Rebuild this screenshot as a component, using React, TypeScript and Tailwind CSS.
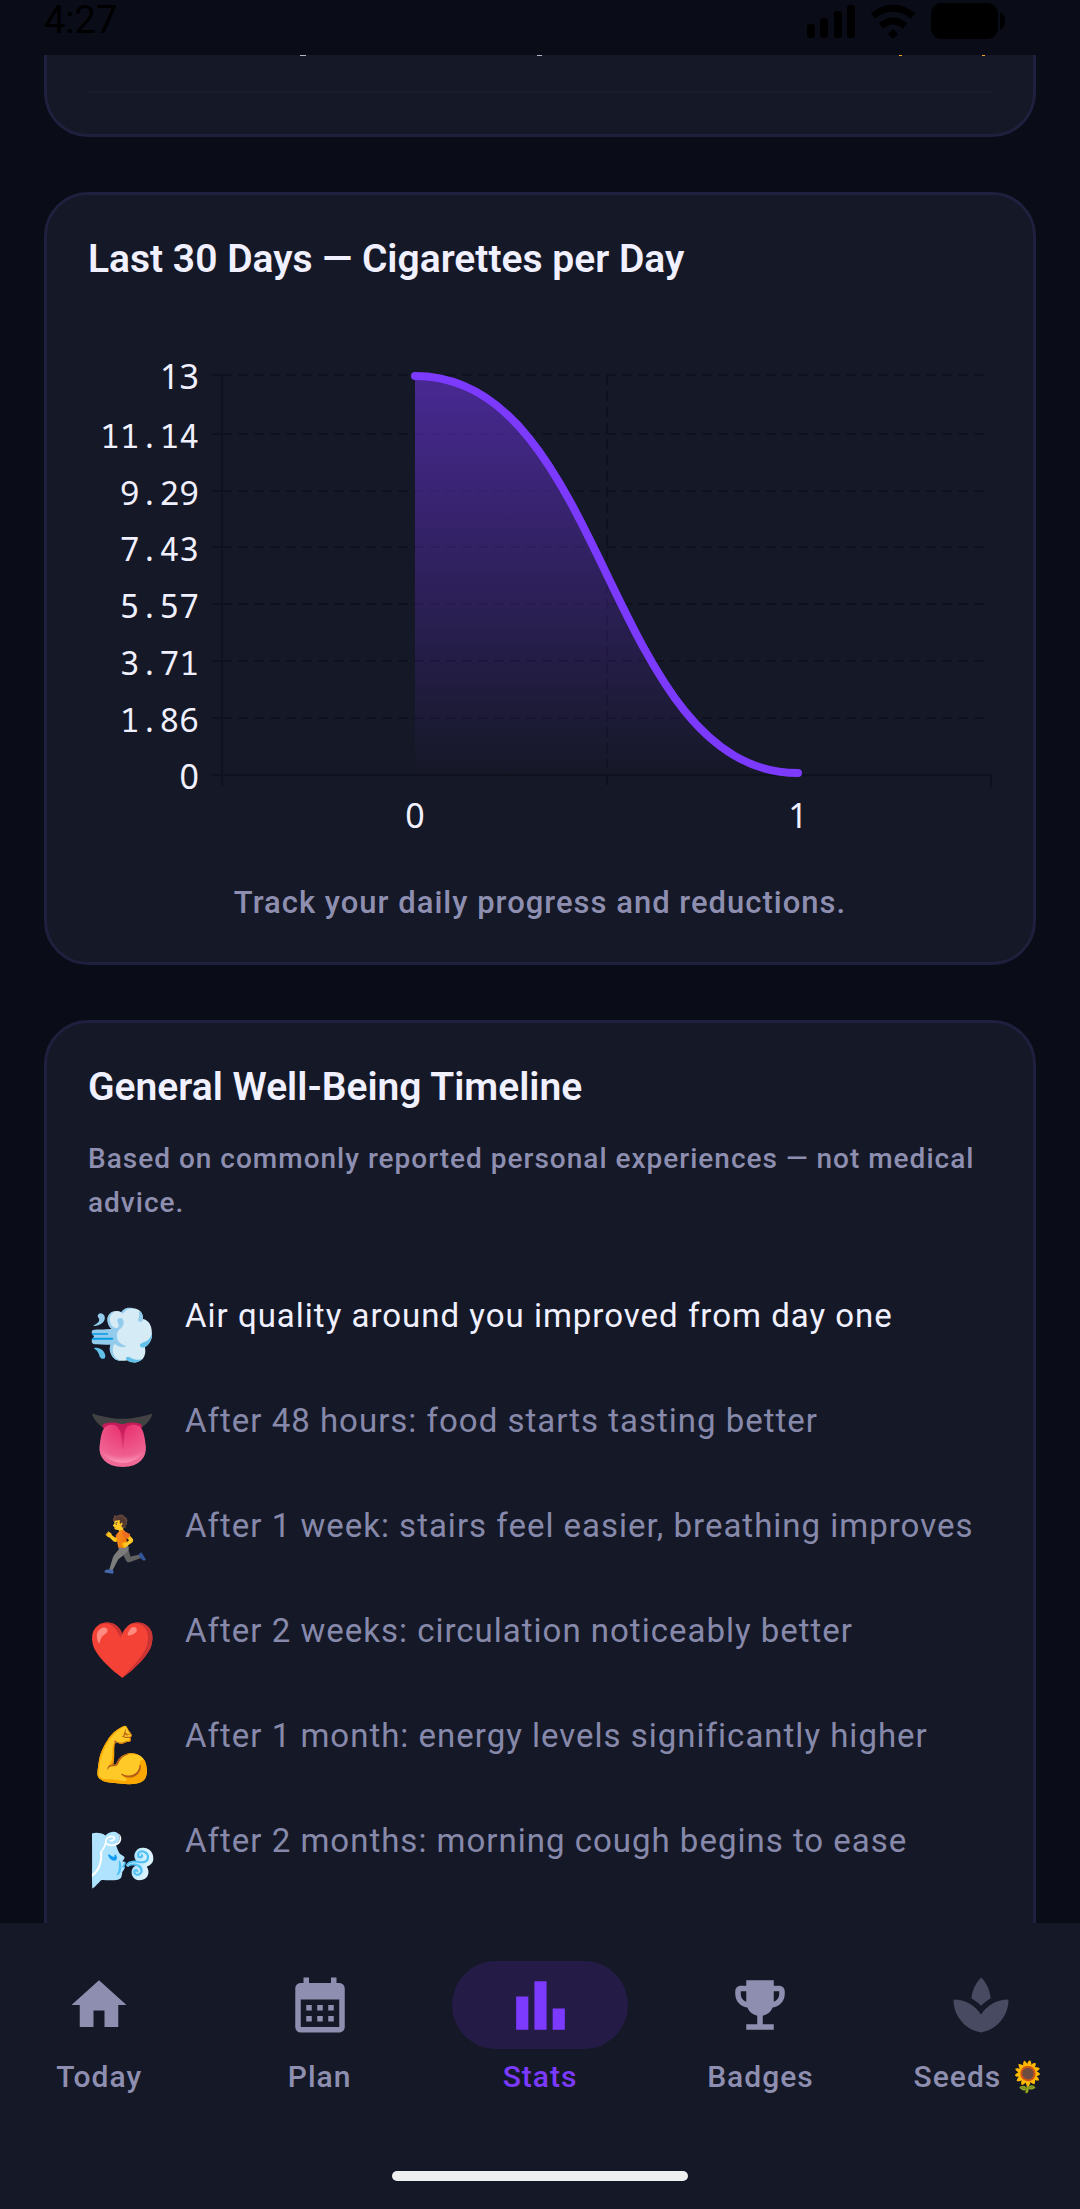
import type { ReactNode } from 'react';
import type { IconType } from 'react-icons';
import { MdBarChart, MdCalendarMonth, MdEmojiEvents, MdHome, MdSpa } from 'react-icons/md';
import { clsx } from 'clsx';

const milestones = [
  { emoji: '💨', text: 'Air quality around you improved from day one', reached: true },
  { emoji: '👅', text: 'After 48 hours: food starts tasting better', reached: false },
  { emoji: '🏃', text: 'After 1 week: stairs feel easier, breathing improves', reached: false },
  { emoji: '❤️', text: 'After 2 weeks: circulation noticeably better', reached: false },
  { emoji: '💪', text: 'After 1 month: energy levels significantly higher', reached: false },
  { emoji: '🌬️', text: 'After 2 months: morning cough begins to ease', reached: false },
];

const ticks = [
  { label: '13', y: 93 },
  { label: '11.14', y: 152 },
  { label: '9.29', y: 209 },
  { label: '7.43', y: 265 },
  { label: '5.57', y: 322 },
  { label: '3.71', y: 379 },
  { label: '1.86', y: 436 },
  { label: '0', y: 493 },
];

const tabs: { label: string; icon: IconType; active?: boolean; locked?: boolean }[] = [
  { label: 'Today', icon: MdHome },
  { label: 'Plan', icon: MdCalendarMonth },
  { label: 'Stats', icon: MdBarChart, active: true },
  { label: 'Badges', icon: MdEmojiEvents },
  { label: 'Seeds 🌻', icon: MdSpa, locked: true },
];

function StatusBar() {
  return (
    <header className="flex h-[55px] shrink-0 items-start justify-between pr-[75px] pl-11 text-black">
      <span className="text-[38px] leading-[41px]">4:27</span>
      <div className="flex items-center gap-4 pt-[3px]">
        <svg className="h-9 w-12" viewBox="0 0 48 36" fill="currentColor" aria-label="Signal">
          <rect x="0" y="21" width="8" height="14" rx="3" />
          <rect x="13" y="15" width="8" height="20" rx="3" />
          <rect x="27" y="8" width="8" height="27" rx="3" />
          <rect x="40" y="2" width="8" height="33" rx="3" />
        </svg>
        <svg className="h-9 w-11" viewBox="0 0 44 36" fill="none" stroke="currentColor" strokeWidth="7" aria-label="Wi-Fi">
          <path d="M2 13Q22 -3 42 13" />
          <path d="M10 23Q22 13 34 23" />
          <path d="M22 26l5 5-5 5-5-5z" fill="currentColor" stroke="none" />
        </svg>
        <svg className="h-9 w-[74px]" viewBox="0 0 74 36" fill="currentColor" aria-label="Battery">
          <rect width="67" height="36" rx="11" />
          <path d="M69 9q5 3 5 9t-5 9z" />
        </svg>
      </div>
    </header>
  );
}

function Card({ title, children }: { title: string; children: ReactNode }) {
  return (
    <section className="rounded-[44px] border-3 border-[#1f203d] bg-[#151827] p-[41px]">
      <h2 className="text-[39px] leading-[46px] font-semibold text-[#f0f0ff]">{title}</h2>
      {children}
    </section>
  );
}

function DailyChart() {
  return (
    <svg className="w-full" viewBox="0 0 904 578" role="img" aria-label="Cigarettes per day">
      <defs>
        <linearGradient id="area" x1="0" y1="0" x2="0" y2="1">
          <stop offset="0" stopColor="#7c3aff" stopOpacity="0.5" />
          <stop offset="1" stopColor="#7c3aff" stopOpacity="0" />
        </linearGradient>
      </defs>

      <g stroke="#0f111f" strokeWidth="2">
        {ticks.map((tick) => (
          <g key={tick.label}>
            <path d={`M124 ${tick.y}H134`} />
            <path d={`M134 ${tick.y}H903`} strokeDasharray={tick.label === '0' ? undefined : '10 6'} />
          </g>
        ))}
        <path d="M134 93V504M903 493V506" />
        <path d="M519 93V506" strokeDasharray="10 6" />
      </g>

      <path d="M327 94C519 94 519 491 710 491V493H327z" fill="url(#area)" />
      <path d="M327 94C519 94 519 491 710 491" fill="none" stroke="#7c3aff" strokeWidth="8" strokeLinecap="round" />

      <g className="[font-family:'Noto_Sans',sans-serif]" fill="#f0f0ff" fontSize="34">
        {ticks.map((tick) => (
          <text
            key={tick.label}
            x="111"
            y={tick.y + 14}
            textAnchor="end"
            className={clsx(
              tick.label.includes('.') && "text-[33px] [font-family:'Noto_Sans_Mono','DejaVu_Sans_Mono',monospace]",
            )}
          >
            {tick.label}
          </text>
        ))}
        <text x="327" y="546" textAnchor="middle">0</text>
        <text x="710" y="546" textAnchor="middle">1</text>
      </g>
    </svg>
  );
}

function TabBar() {
  return (
    <nav className="shrink-0 bg-[#151827] pt-[38px] pb-7">
      <div className="flex gap-[22px]">
        {tabs.map(({ label, icon: Icon, active, locked }) => (
          <button
            key={label}
            type="button"
            className={clsx(
              'flex min-w-0 flex-1 flex-col items-center gap-[6px] text-[30px] leading-11 font-medium tracking-[1px] whitespace-nowrap',
              active ? 'text-[#7c3aff]' : 'text-[#8e8fb0]',
            )}
          >
            <span className={clsx('flex h-22 w-44 items-center justify-center rounded-full', active && 'bg-[#241c46]')}>
              <Icon size={active ? 73 : 66} className={clsx(locked && 'text-[#484a61]')} aria-hidden="true" />
            </span>
            {label}
          </button>
        ))}
      </div>
      <div className="mx-auto mt-[72px] h-[10px] w-[296px] rounded-full bg-[#eff0f0]" />
    </nav>
  );
}

export default function App() {
  return (
    <div className="flex h-screen flex-col bg-[#0a0c18] [font-family:Roboto,'Noto_Color_Emoji',sans-serif]">
      <StatusBar />
      <main className="flex min-h-0 flex-1 flex-col gap-[55px] overflow-hidden px-11 *:shrink-0">
        {/* tail of the card scrolled under the status bar */}
        <section className="rounded-b-[44px] border-3 border-t-0 border-[#1f203d] bg-[#151827] px-[41px] pb-[41px]">
          <svg className="h-[2px] w-full" viewBox="0 0 904 2" aria-hidden="true">
            <path d="M212 0h6M449 0h5" stroke="#b4b5c8" strokeWidth="2" />
            <path d="M811 0h3M894 0h3" stroke="#f5a524" strokeWidth="2" />
          </svg>
          <hr className="mt-[34px] border-t-2 border-[#1b1c2c]" />
        </section>

        <Card title="Last 30 Days — Cigarettes per Day">
          <DailyChart />
          <p className="mt-[25px] text-center text-[31px] leading-9 font-medium tracking-[1px] text-[#8e8fb0]">
            Track your daily progress and reductions.
          </p>
        </Card>

        <Card title="General Well-Being Timeline">
          <p className="mt-[27px] text-[28px] leading-11 font-medium tracking-[1px] text-[#8e8fb0]">
            Based on commonly reported personal experiences — not medical advice.
          </p>
          <ul className="mt-[69px] flex flex-col gap-[22px] pb-11">
            {milestones.map(({ emoji, text, reached }) => (
              <li key={text} className="flex h-[83px] items-start">
                <span className="w-[97px] shrink-0 text-[55px] leading-[83px]">{emoji}</span>
                <span
                  className={clsx(
                    'text-[33px] leading-11 tracking-[1px] whitespace-nowrap',
                    reached ? 'text-[#f0f0ff]' : 'text-[#8789ab]',
                  )}
                >
                  {text}
                </span>
              </li>
            ))}
          </ul>
        </Card>
      </main>
      <TabBar />
    </div>
  );
}
